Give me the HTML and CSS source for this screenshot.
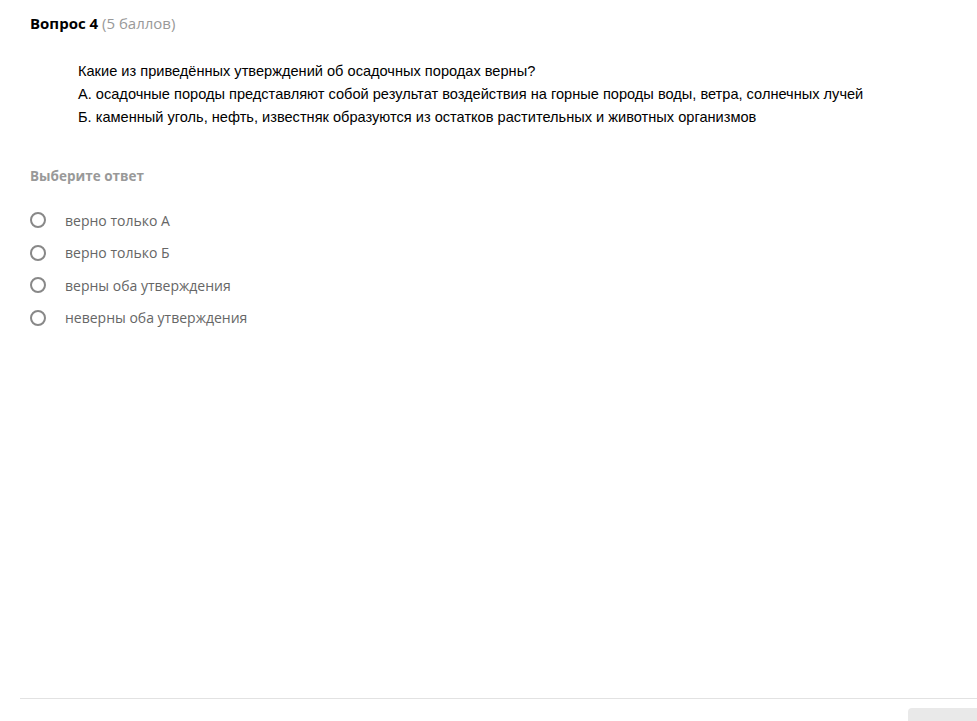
FILE: index.html
```html
<!DOCTYPE html>
<html lang="ru">
<head>
<meta charset="utf-8">
<link rel="stylesheet" href="styles.css">
</head>
<body>
<div class="page">
  <div class="title"><b>Вопрос 4</b> <span class="pts">(5 баллов)</span></div>
  <div class="question">
    <p>Какие из приведённых утверждений об осадочных породах верны?</p>
    <p>А. осадочные породы представляют собой результат воздействия на горные породы воды, ветра, солнечных лучей</p>
    <p>Б. каменный уголь, нефть, известняк образуются из остатков растительных и животных организмов</p>
  </div>
  <div class="choose">Выберите ответ</div>
  <ul class="options">
    <li><span class="radio"></span><span>верно только А</span></li>
    <li><span class="radio"></span><span>верно только Б</span></li>
    <li><span class="radio"></span><span>верны оба утверждения</span></li>
    <li><span class="radio"></span><span>неверны оба утверждения</span></li>
  </ul>
</div>
<div class="footer"><div class="btn"></div></div>
</body>
</html>
```
FILE: styles.css
```css
html, body { margin: 0; padding: 0; background: #fff; }
body { font-family: "Open Sans", sans-serif; width: 977px; height: 721px; overflow: hidden; }
.page { padding: 12px 0 0 30px; height: 698px; box-sizing: border-box; }
.title { font-size: 15px; line-height: 22px; color: #000; }
.title b { font-weight: 700; }
.pts { color: #999; }
.question { margin: 26px 0 0 48px; font-family: "Liberation Sans", sans-serif; font-size: 14.6px; color: #000; }
.question p { margin: 0; line-height: 23px; }
.choose { margin-top: 37px; font-size: 13.5px; font-weight: 700; color: #999; line-height: 20px; }
.options { list-style: none; margin: 18px 0 0 0; padding: 0; }
.options li { display: flex; align-items: center; height: 32.5px; font-size: 14px; color: #666; }
.radio { width: 12px; height: 12px; border: 2px solid #888; border-radius: 50%; margin-right: 19px; flex: none; }
.footer { border-top: 1px solid #e2e2e2; margin-left: 20px; height: 22px; display: flex; justify-content: flex-end; align-items: flex-end; }
.btn { width: 69px; height: 13px; background: #e9e9e9; border-radius: 4px 0 0 0; }
```
